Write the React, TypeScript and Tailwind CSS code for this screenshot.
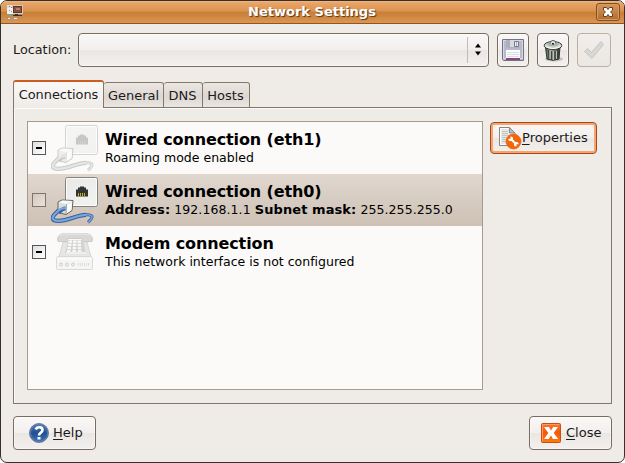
import React from "react";

const button =
  "flex items-center rounded-[4px] border border-[#776e61] bg-[linear-gradient(#faf8f7_0%,#f2efed_49%,#eae6e3_51%,#f3f0ed_100%)] shadow-[inset_0_0_0_1px_rgba(255,255,255,0.45)]";

function NetworkIcon() {
  return (
    <svg width="16" height="17" viewBox="0 0 16 17" shapeRendering="crispEdges">
      <path d="M0 1h6v9H0z" fill="#dedede" />
      <path d="M5 1h11v9H5z" fill="#d3c9bf" />
      <path d="M6 2h9v7H6z" fill="#5b372c" />
      <path d="M7 3h7v5H7z" fill="#8d4e3a" />
      <path d="M9 4h4v2H9z" fill="#b48468" />
      <path d="M0 4h6v6H0z" fill="#f0f0f0" />
      <path d="M2 2h1v1H2zM4 3h1v1H4zM2 6h1v1H2zM4 7h1v1H4z" fill="#888" />
      <path d="M8 10h3v1h4v1H6v-1h2z" fill="#333" />
      <path d="M1 10h4v2H1zM0 14h3v2H0zM5 12h4v1H5zM10 13h4v1h-4zM3 14h5v1H3z" fill="#8f979b" />
      <path d="M4 10h2v1H4z" fill="#69b02e" />
      <path d="M7 14h3v1H7zM1 14h2v1H1z" fill="#eee" />
    </svg>
  );
}

function FloppyIcon() {
  return (
    <svg width="22" height="22" viewBox="0 0 22 22">
      <path d="M.5.5h21v21h-20l-1-1z" fill="#b9bac9" stroke="#737384" />
      <path d="M1.500 1.500h19v18h-19z" fill="none" stroke="#d8d9e4" />
      <path d="M4 11h14v10H4z" fill="#fcfcff" />
      <path d="M4 19h14v2H4z" fill="#874680" />
      <path d="M5 13.500h12M5 15.500h12M5 17.500h12" stroke="#dcdce6" />
      <path d="M7 1h10v8H7z" fill="#d9dae0" />
      <path d="M4 1h4v7h9v1H5L4 8z" fill="#aeb0bd" />
      <path d="M12.500 2.500h4v5h-4z" fill="#eee" stroke="#777987" />
      <path d="M14 3h1v4h-1z" fill="#b4b4bb" />
    </svg>
  );
}

function TrashIcon() {
  return (
    <svg width="22" height="23" viewBox="0 0 22 23">
      <defs>
        <linearGradient id="bin">
          <stop stopColor="#444942" />
          <stop offset=".35" stopColor="#adb2aa" />
          <stop offset=".65" stopColor="#71776e" />
          <stop offset="1" stopColor="#262a25" />
        </linearGradient>
      </defs>
      <ellipse cx="12" cy="20" rx="9" ry="2.500" fill="#000" opacity=".18" />
      <path d="M3.500 8h14.500l-1 12q-6 2.500-12 0z" fill="url(#bin)" stroke="#30342f" />
      <path d="M6.500 11l.5 9M9.500 12v9M13 12v9M16 11l-.5 9" stroke="#3e433b" strokeWidth="1.300" />
      <path d="M8 12v8M11.500 12v9M14.500 12v8" stroke="#c4c9c1" strokeWidth=".9" />
      <ellipse cx="11" cy="6.500" rx="8.800" ry="4" fill="#d1d5ce" stroke="#343833" />
      <path d="M3.500 7.500q7.500 4 15 0" fill="none" stroke="#fff" />
      <ellipse cx="11" cy="5.300" rx="6" ry="2.200" fill="#aeb4ab" />
      <path d="M8 4.500q0-3 3-3t3 3" fill="#e6e7e5" stroke="#52574f" />
      <path d="M10 4h2v1.500h-2z" fill="#20231f" />
    </svg>
  );
}

function CheckIcon() {
  return (
    <svg width="22" height="20" viewBox="0 0 22 20">
      <path d="M1.500 11.500l3-3 4 4L18 1.500l2.500 3L9 18.500z" fill="#d9d7d3" stroke="#c8c6c1" strokeLinejoin="round" />
    </svg>
  );
}

function WiredIcon({ faded = false }: { faded?: boolean }) {
  const edge = faded ? "#d3d3d1" : "#81847d";
  const cable = "M15 32q-5 0-8 3l-4 4q-4 5.500 4 5.800C17 45 26 38.800 35 38.800";
  const cableEnd = "M35 38.800q11-.5 2 7.500";
  const outer = faded ? "#c9c9c9" : "#345e9d";
  const inner = faded ? "#e6e6e6" : "#78a5e0";
  return (
    <svg className="mr-px" width="48" height="48" viewBox="0 0 48 48">
      <defs>
        <linearGradient id={faded ? "plateFaded" : "plate"} x2="1" y2="1">
          <stop stopColor={faded ? "#f5f5f4" : "#e8e9e7"} />
          <stop offset="1" stopColor={faded ? "#f1f1f0" : "#f3f3f1"} />
        </linearGradient>
      </defs>
      <rect x="14.500" y="1.500" width="32" height="29" rx="2" fill={faded ? "url(#plateFaded)" : "url(#plate)"} stroke={edge} />
      <rect x="15.500" y="2.500" width="30" height="27" rx="1" fill="none" stroke="#fff" opacity=".8" />
      <path d="M25 20.500v-7h2v-2h2v-1h4v1h2v2h2v7z" fill={faded ? "#c7c7c5" : "#303432"} />
      <path d="M27.500 17v3M29.500 17v3M31.500 17v3M33.500 17v3" stroke={faded ? "#d0d0cd" : "#c5ad13"} />
      <path d={cable} fill="none" stroke={outer} strokeWidth="4.200" />
      <path d={cableEnd} fill="none" stroke={outer} strokeWidth="3" />
      <path d="M7 26l4-2 11 .5-1 10-6 4-8-2z" fill={faded ? "#eee" : "#dcdeda"} stroke={faded ? "#cacac8" : "#62665f"} strokeLinejoin="round" />
      <path d="M7.500 26.500l8 1.500 6-3-10-.5z" fill="#fafaf8" />
      <path d="M15.500 29l5.500-3-.5 8-5 3.500z" fill="#fcfcfa" />
      <path d="M15.500 28.500l-.5 9" stroke={faded ? "#d5d5d3" : "#858982"} strokeWidth=".8" />
      <path d="M14.500 32.500q-3 0-7 4" fill="none" stroke={outer} strokeWidth="4" />
      <path d={cable} fill="none" stroke={inner} strokeWidth="2.200" />
      <path d={cableEnd} fill="none" stroke={inner} strokeWidth="1.600" />
    </svg>
  );
}

function PhoneIcon() {
  return (
    <svg width="40" height="40" viewBox="0 0 40 40">
      <path d="M8 10h24l4 15H4z" fill="#e6e6e4" stroke="#d6d6d4" />
      <path d="M2.500 24.500h34l1 2v10q0 1-1 1h-34q-1 0-1-1v-10z" fill="#f5f5f4" stroke="#d9d9d6" />
      <path d="M2 27h35" stroke="#fff" />
      <path d="M3 9.500q-2-6 5-8h24q7 2 5 8h-9l-1-3H13l-1 3z" fill="#d8d9d6" stroke="#cbccc9" />
      <path d="M5 4q2-2 5-2h21q3 0 4 2" fill="none" stroke="#ececea" />
      <path d="M13 8h15l3 14H10z" fill="#d3d3d0" />
      {[0, 1, 2, 3].map((r) =>
        [0, 1, 2].map((c) => (
          <rect key={`${r}-${c}`} x={13.5 - r * 0.5 + c * (4.5 + r * 0.3)} y={8.5 + r * 3.2} width="3.500" height="2.300" fill="#f9f9f8" />
        )),
      )}
      <path d="M11 20h20v2H11z" fill="#efefed" />
      {[6, 12, 18].map((x) => (
        <circle key={x} cx={x} cy="32.500" r="1.500" fill="#eee" stroke="#d0d0cd" />
      ))}
      <path d="M23.500 31v3M25.500 31v3M27.500 31v3M29.500 31v3M31.500 31v3M33.500 31v3" stroke="#dededb" />
    </svg>
  );
}

function PropertiesIcon() {
  return (
    <svg width="24" height="24" viewBox="0 0 24 24">
      <path d="M1.500 1.500h10l5.500 5.500v12.500H1.500z" fill="#e7e8e6" stroke="#858783" />
      <path d="M2.500 2.500h9v5h4.500v11H2.500z" fill="none" stroke="#fff" />
      <path d="M11.500 1.500v5.500H17z" fill="#babdb8" stroke="#8a8c88" />
      <path d="M4 5.500h6M4 7.500h6M4 9.500h10M4 11.500h7M4 13.500h5M4 15.500h5" stroke="#c3c5c1" />
      <circle cx="15.500" cy="15.500" r="7.500" fill="#f5650a" stroke="#e95a04" strokeWidth=".6" />
      <path d="M13 13l5 5" stroke="#fff" strokeWidth="2.200" />
      <path d="M12.500 10.500v2.200h-2.200c-.2 2 1.700 3 3.300 2l1.100-1.100c1-1.600-.2-3.300-2.200-3.100zM18.500 20.500v-2.200h2.200c.2-2-1.700-3-3.300-2l-1.100 1.100c-1 1.600.2 3.300 2.200 3.100z" fill="#fff" />
    </svg>
  );
}

function HelpIcon() {
  return (
    <svg width="22" height="22" viewBox="0 0 22 22">
      <defs>
        <linearGradient id="help" x2="0" y2="1">
          <stop stopColor="#547bb6" />
          <stop offset=".5" stopColor="#214f91" />
          <stop offset="1" stopColor="#4374b4" />
        </linearGradient>
      </defs>
      <circle cx="11" cy="11" r="9.500" fill="url(#help)" stroke="#6d7f97" />
      <circle cx="11" cy="11" r="8.500" fill="none" stroke="#5c84bd" strokeWidth=".8" />
      <path d="M7.800 7.500c1-3 6.700-3 6.700.5 0 3-3.500 2.200-3.500 5.500" fill="none" stroke="#fff" strokeWidth="2.600" />
      <path d="M9.500 15h3v2.500h-3z" fill="#fff" />
    </svg>
  );
}

function CloseIcon() {
  return (
    <svg width="22" height="22" viewBox="0 0 22 22">
      <defs>
        <linearGradient id="close" x2="0" y2="1">
          <stop stopColor="#f57931" />
          <stop offset=".5" stopColor="#f35806" />
          <stop offset="1" stopColor="#ff7b12" />
        </linearGradient>
      </defs>
      <rect x="1.500" y="1.500" width="19" height="19" rx="1" fill="url(#close)" stroke="#c94e16" />
      <path d="M2.500 19V2.500H19" fill="none" stroke="#ff995d" />
      <path d="M4 5h5l2 3.500L13.200 5h4.800l-4.200 6 4.400 6H13l-2-3.500L8.700 17H4l4.300-6z" fill="#fff" />
    </svg>
  );
}

function Expander({ selected = false }: { selected?: boolean }) {
  return (
    <div
      className={`ml-1 flex h-[14px] w-[14px] shrink-0 items-center justify-center border ${
        selected ? "border-[#7f756c] bg-linear-to-br from-[#d3c8be] to-[#eae2db]" : "border-[#555555] bg-linear-to-br from-[#dedede] to-white"
      }`}
    >
      {!selected && <div className="h-[2px] w-[6px] bg-black" />}
    </div>
  );
}

function Row({ title, children, icon, selected = false }: { title: string; children: React.ReactNode; icon: React.ReactNode; selected?: boolean }) {
  return (
    <div className={`flex h-[52px] items-center ${selected ? "bg-linear-to-b from-[#e0d7cf] to-[#cec1b5]" : ""}`}>
      <Expander selected={selected} />
      <div className="ml-1 flex h-[48px] w-[50px] shrink-0 items-center justify-center">{icon}</div>
      <div className="ml-[5px] whitespace-nowrap text-black">
        <div className="h-[19px] text-[16px] leading-[19px] font-bold tracking-[-0.120px]">{title}</div>
        <div className={`h-[17px] text-[12.500px] leading-[18px] ${selected ? "tracking-[0.080px]" : "tracking-[0.010px]"}`}>{children}</div>
      </div>
    </div>
  );
}

function Tab({ label, className }: { label: string; className: string }) {
  return (
    <div className={`flex h-[26px] items-center justify-center rounded-t-[3px] border border-l-0 border-[#827869] bg-[linear-gradient(#ece7e3,#ddd7d2_55%,#eae6e2)] pt-px ${className}`}>
      {label}
    </div>
  );
}

export default function App() {
  return (
    <div className="h-[463px] w-[625px] overflow-hidden bg-white font-['DejaVu_Sans',sans-serif] text-[13px] text-[#1b1b1b]">
      <div className="flex h-full w-full flex-col overflow-hidden rounded-[7px] border border-[#34302e] bg-[#efebe7]">
        <header className="flex h-[23px] shrink-0 items-center border-b border-[#8e5526] bg-[linear-gradient(#f2b982_0%,#e9a468_8%,#db944f_45%,#c87f38_52%,#d18a43_75%,#dc9653_100%)] pl-[6px]">
          <NetworkIcon />
          <div className="flex-1 pl-[5px] text-center leading-[22px] font-bold text-white [text-shadow:1px_1px_1px_#553719]">Network Settings</div>
          <button className="mr-1 flex h-[18px] w-[24px] items-center justify-center rounded-[3px] border border-[#815126] bg-linear-to-b from-[#d8965a] to-[#b56d2c] shadow-[inset_0_0_0_1px_#d99a61]">
            <svg width="12" height="12" viewBox="0 0 12 12">
              <path d="M1.500 1.500h3L6 3.500l1.500-2h3v2.700L8.500 6l2 1.800v2.700h-3L6 8.500l-1.500 2h-3V7.800L3.500 6l-2-1.800z" fill="#fff" stroke="#63401f" />
            </svg>
          </button>
        </header>

        <div className="mt-[9px] ml-3 flex h-[34px] shrink-0 items-center">
          <span className="w-[65px] text-[12.800px]">Location:</span>
          <button className={`${button} h-[34px] w-[411px] justify-end`}>
            <div className="h-[26px] w-px bg-[#c3bcb5]" />
            <svg className="mr-[4px] ml-[4px]" width="12" height="14" viewBox="0 0 12 14">
              <path d="M3 4.500l3-4 3 4zM3 8.500h6l-3 4z" fill="#000" />
            </svg>
          </button>
          <button className={`${button} ml-2 h-[34px] w-[32px] justify-center`}><FloppyIcon /></button>
          <button className={`${button} ml-2 h-[34px] w-[32px] justify-center`}><TrashIcon /></button>
          <button className="ml-2 flex h-[34px] w-[34px] items-center justify-center rounded-[4px] border border-[#bdb0a3] bg-linear-to-b from-[#f1eeeb] to-[#ebe7e3]"><CheckIcon /></button>
        </div>

        <nav className="relative z-10 mt-[13px] ml-3 flex h-[28px] shrink-0 items-end">
          <div className="flex h-[28px] w-[91px] items-center justify-center rounded-t-[3px] border-x border-t-2 border-x-[#827869] border-t-[#cd5c20] bg-linear-to-b from-[#faf8f6] to-[#efebe7] text-[12.900px]">Connections</div>
          <Tab label="General" className="w-[60px]" />
          <Tab label="DNS" className="w-[39px] pr-px" />
          <Tab label="Hosts" className="w-[47px] pr-px" />
        </nav>

        <main className="mt-[-1px] ml-3 flex h-[297px] w-[599px] shrink-0 border border-[#827869] shadow-[inset_1px_1px_0_#fbfaf8]">
          <div className="mt-[13px] ml-[13px] h-[269px] w-[456px] border border-[#a89b8e] bg-[#fbfaf8]">
            <Row title="Wired connection (eth1)" icon={<WiredIcon faded />}>Roaming mode enabled</Row>
            <Row title="Wired connection (eth0)" icon={<WiredIcon />} selected><b className="text-[13px]">Address:</b> 192.168.1.1 <b className="text-[13px]">Subnet mask:</b> 255.255.255.0</Row>
            <Row title="Modem connection" icon={<PhoneIcon />}>This network interface is not configured</Row>
          </div>
          <button className="mt-[14px] ml-[7px] flex h-[32px] w-[107px] items-center rounded-[4px] border border-[#9c4a20] bg-[linear-gradient(#faf8f7_0%,#f2efed_49%,#eae6e3_51%,#f3f0ed_100%)] pl-[7px] whitespace-nowrap shadow-[inset_0_0_0_2px_#fba36b]">
            <PropertiesIcon />
            <span className="pb-px"><u className="underline-offset-2">P</u>roperties</span>
          </button>
        </main>

        <footer className="mx-3 mt-3 flex h-[34px] shrink-0 justify-between">
          <button className={`${button} w-[83px] pl-[14px]`}><HelpIcon /><span className="ml-[3px]"><u className="underline-offset-2">H</u>elp</span></button>
          <button className={`${button} w-[83px] pl-[10px]`}><CloseIcon /><span className="ml-[4px]"><u className="underline-offset-2">C</u>lose</span></button>
        </footer>
      </div>
    </div>
  );
}
